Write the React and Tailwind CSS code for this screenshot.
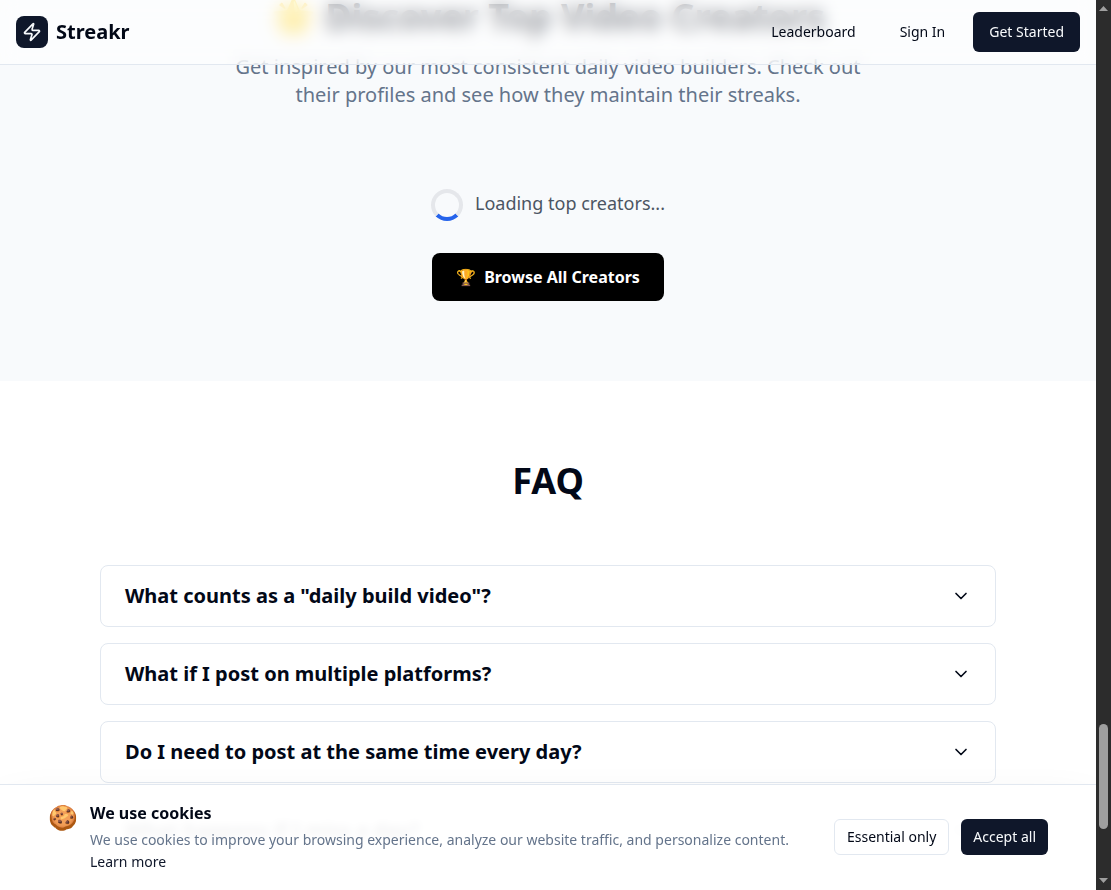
import React from "react";
import { ChevronDown, Zap } from "lucide-react";

const questions = [
  'What counts as a "daily build video"?',
  "What if I post on multiple platforms?",
  "Do I need to post at the same time every day?",
  "What happens if I miss a day?",
];

function Header() {
  return (
    <header className="absolute inset-x-0 top-0 z-40 border-b border-[#e2e8f0] bg-white/60 backdrop-blur-sm">
      <div className="flex h-16 items-center justify-between px-4">
        <div className="flex items-center gap-2">
          <div className="flex size-8 items-center justify-center rounded-lg bg-[#0f172a]">
            <Zap className="size-5 text-[#f8fafc]" />
          </div>
          <span className="text-xl font-bold">Streakr</span>
        </div>
        <nav className="flex items-center gap-3 text-sm">
          <a className="px-4">Leaderboard</a>
          <a className="px-4">Sign In</a>
          <button className="h-10 rounded-md bg-[#0f172a] px-4 text-[#f8fafc]">Get Started</button>
        </nav>
      </div>
    </header>
  );
}

function Creators() {
  return (
    <section className="flex flex-col items-center bg-[#f8fafc] pb-20">
      <h2 className="-mt-[3px] mb-4 text-4xl leading-10 font-bold">🌟 Discover Top Video Creators</h2>
      <p className="w-[672px] text-center text-xl leading-7 text-[#64748b]">
        Get inspired by our most consistent daily video builders. Check out their profiles and see how they maintain their streaks.
      </p>
      <div className="mt-20 flex h-8 items-start">
        <div className="size-8 rounded-full border-4 border-[#e5e7eb] border-b-[#2563eb]" />
        <span className="ml-3 text-lg text-[#4b5563]">Loading top creators...</span>
      </div>
      <button className="mt-8 flex h-12 items-center rounded-lg bg-black px-6 font-bold text-white">
        <span className="mr-2">🏆</span>Browse All Creators
      </button>
    </section>
  );
}

function Faq() {
  return (
    <section className="flex flex-col items-center bg-white pt-20">
      <h2 className="mb-16 text-4xl leading-10 font-bold">FAQ</h2>
      <div className="flex w-[896px] flex-col gap-4">
        {questions.map((q) => (
          <div key={q} className="flex h-[62px] items-center justify-between rounded-lg border border-[#e2e8f0] px-6">
            <h3 className="text-xl font-bold">{q}</h3>
            <ChevronDown className="size-5" />
          </div>
        ))}
      </div>
    </section>
  );
}

function CookieBar() {
  return (
    <div className="absolute inset-x-0 bottom-0 z-50 flex h-[106px] items-center justify-between border-t border-[#e2e8f0] bg-white/95 px-12 pb-0.5 shadow-[0_25px_50px_-12px_rgba(0,0,0,0.25)] backdrop-blur-xs">
      <div className="flex items-start gap-3">
        <span className="text-2xl leading-8">🍪</span>
        <div>
          <h3 className="mb-1 leading-6 font-bold">We use cookies</h3>
          <p className="w-[720px] text-sm leading-[22px] text-[#64748b]">
            We use cookies to improve your browsing experience, analyze our website traffic, and personalize content.
            <br />
            <a className="text-[#0f172a]">Learn more</a>
          </p>
        </div>
      </div>
      <div className="flex shrink-0 gap-3 text-sm">
        <button className="h-9 rounded-md border border-[#e2e8f0] bg-white px-3">Essential only</button>
        <button className="h-9 rounded-md bg-[#0f172a] px-3 text-[#f8fafc]">Accept all</button>
      </div>
    </div>
  );
}

function Scrollbar() {
  return (
    <div className="flex w-[15px] shrink-0 flex-col items-center bg-[#2c2c2c] text-[#9f9f9f]">
      <svg className="h-[15px] w-[15px]" viewBox="0 0 15 15" fill="currentColor"><path d="M3 11h9L7.5 6z" /></svg>
      <div className="mt-[709px] h-[105px] w-[9px] rounded-full bg-[#9f9f9f]" />
      <svg className="mt-auto h-[15px] w-[15px]" viewBox="0 0 15 15" fill="currentColor"><path d="M3 3h9L7.5 8z" /></svg>
    </div>
  );
}

export default function App() {
  return (
    <div className="flex h-[890px] w-[1111px] overflow-hidden bg-white font-['Noto_Sans',sans-serif] text-[#020817]">
      <main className="relative h-full w-[1096px] overflow-hidden">
        <Header />
        <Creators />
        <Faq />
        <CookieBar />
      </main>
      <Scrollbar />
    </div>
  );
}
